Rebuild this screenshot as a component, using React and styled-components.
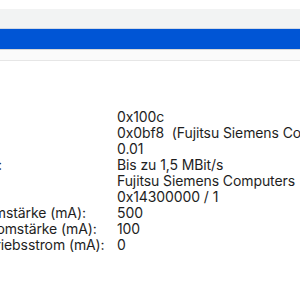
import styled, { createGlobalStyle } from 'styled-components'

const GlobalStyle = createGlobalStyle`
  html, body {
    margin: 0;
    padding: 0;
    background: #fff;
    overflow: hidden;
  }
  body {
    font-family: Inter, "Liberation Sans", Arial, sans-serif;
  }
`

const details = [
  ['Produkt-ID:', '0x100c'],
  ['Hersteller-ID:', '0x0bf8  (Fujitsu Siemens Computers)'],
  ['Version:', '0.01'],
  ['Geschwindigkeit:', 'Bis zu 1,5 MBit/s'],
  ['Hersteller:', 'Fujitsu Siemens Computers'],
  ['Standort-ID:', '0x14300000 / 1'],
  ['Verfügbare Stromstärke (mA):', '500'],
  ['Erforderliche Stromstärke (mA):', '100'],
  ['Zusätzlicher Betriebsstrom (mA):', '0'],
]

const App = () => {
  return (
    <Window>
      <GlobalStyle />
      <List>
        <ListRow $tone="white" $h={9} />
        <ListRow $tone="gray" $h={19} />
        <ListRow $tone="selected" $h={20} />
      </List>
      <Splitter />
      <Detail>
        <Grid>
          {details.map(([label, value]) => (
            <Item key={label}>
              <Label>{label}</Label>
              <Value>{value}</Value>
            </Item>
          ))}
        </Grid>
      </Detail>
    </Window>
  )
}

export default App

const Window = styled.div`
  width: 300px;
  height: 300px;
  overflow: hidden;
  background: #fff;
  display: flex;
  flex-direction: column;
`

const List = styled.div`
  display: flex;
  flex-direction: column;
`

const tones = {
  white: '#ffffff',
  gray: '#f2f3f3',
  selected: '#0055d5',
}

const ListRow = styled.div`
  height: ${(p) => p.$h}px;
  background: ${(p) => tones[p.$tone]};
  ${(p) => p.$tone === 'gray' && 'border-bottom: 1px solid #d2d8e4;'}
`

const Splitter = styled.div`
  height: 10px;
  background: #fafafa;
  border-top: 1px solid #d6d6d6;
  border-bottom: 1px solid #e6e6e6;
`

const Detail = styled.div`
  flex: 1;
  padding-top: 48px;
  overflow: hidden;
`

const Grid = styled.div`
  display: grid;
  grid-template-columns: 227px auto;
  margin-left: -110px;
  font-size: 14px;
  letter-spacing: -0.1px;
  line-height: 16px;
  color: #1e1e1e;
  white-space: pre;
`

const Item = styled.div`
  display: contents;
`

const Label = styled.div``

const Value = styled.div``
